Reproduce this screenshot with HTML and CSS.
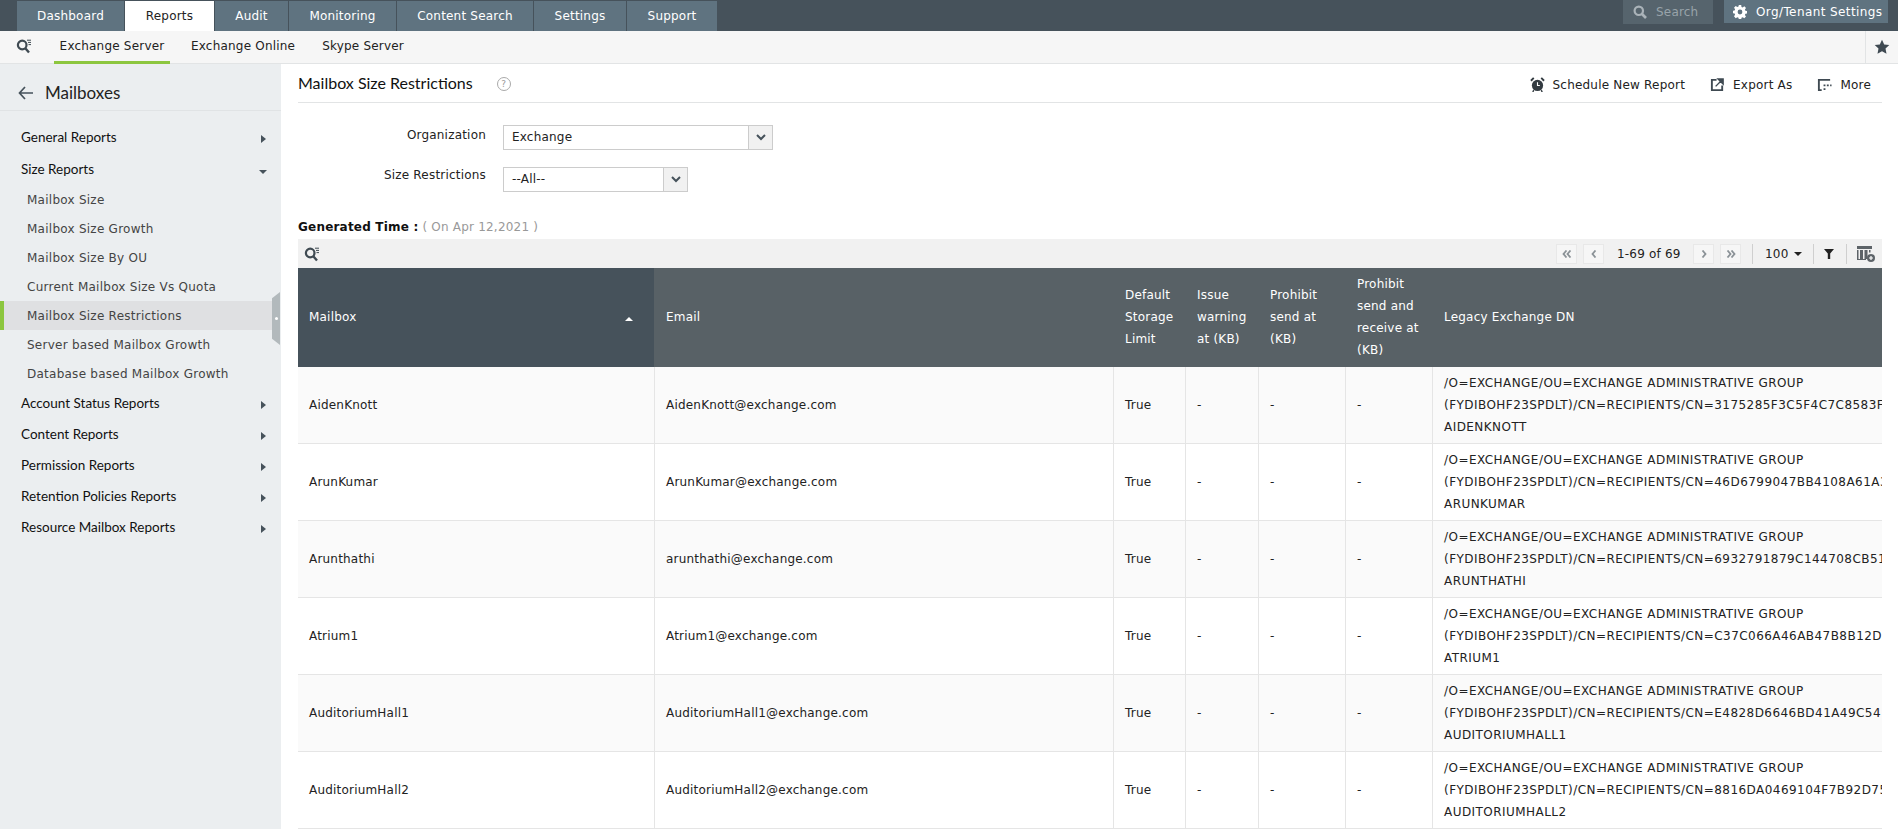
FILE: index.html
```html
<!DOCTYPE html>
<html lang="en">
<head>
<meta charset="utf-8">
<title>Mailbox Size Restrictions</title>
<link rel="stylesheet" href="styles.css">
</head>
<body>
<header class="topbar">
  <nav class="tabs">
    <a class="tab t-dash">Dashboard</a>
    <a class="tab tab-active t-rep">Reports</a>
    <a class="tab t-aud">Audit</a>
    <a class="tab t-mon">Monitoring</a>
    <a class="tab t-con">Content Search</a>
    <a class="tab t-set">Settings</a>
    <a class="tab t-sup">Support</a>
  </nav>
  <div class="top-right">
    <div class="top-search">
      <svg class="ic14" viewBox="0 0 14 14"><circle cx="5.8" cy="5.8" r="4.2" fill="none" stroke="#aab3b9" stroke-width="2.2"/><path d="M9 9l4 4" stroke="#aab3b9" stroke-width="2.6"/></svg>
      <span>Search</span>
    </div>
    <div class="org-btn">
      <svg class="ic14" viewBox="0 0 14 14"><path fill="#fff" fill-rule="evenodd" d="M5.8 0h2.4l.3 1.9 1.2.5L11.3 1.300l1.700 1.700-1.100 1.600.5 1.200 1.900.3v2.400l-1.900.3-.5 1.200 1.100 1.600-1.700 1.700-1.600-1.100-1.200.5-.3 1.900H5.800l-.3-1.900-1.200-.5-1.600 1.100L1 11.300l1.100-1.600-.5-1.200L-.3 8.200V5.800l1.900-.3.500-1.200L1 2.700 2.700 1l1.600 1.100 1.200-.5zM7 4.600a2.400 2.400 0 100 4.800 2.400 2.400 0 000-4.800z"/></svg>
      <span>Org/Tenant Settings</span>
    </div>
  </div>
</header>

<div class="subbar">
  <svg class="search-ic sub-search" viewBox="0 0 16 16"><circle cx="6.200" cy="7" r="4.300" fill="none" stroke="#3f4a52" stroke-width="2.200"/><path d="M9.500 10.500l3.500 4" stroke="#3f4a52" stroke-width="2.400"/><path d="M11 2.200h4M12 4.400h3M12.500 6.600h2.500" stroke="#3f4a52" stroke-width="1"/></svg>
  <a class="subtab subtab-active">Exchange Server</a>
  <a class="subtab">Exchange Online</a>
  <a class="subtab">Skype Server</a>
  <div class="star-cell">
    <svg class="star" viewBox="0 0 16 16"><path fill="#3f4a52" d="M8 .8l2.200 4.700 5.100.6-3.800 3.500 1 5.100L8 12.200l-4.500 2.500 1-5.100L.7 6.100l5.100-.6z"/></svg>
  </div>
</div>

<div class="body">
  <aside class="side">
    <div class="side-head">
      <svg class="back" viewBox="0 0 15 14"><path d="M7 1L1.500 7 7 13M1.500 7H15" fill="none" stroke="#46525b" stroke-width="1.700"/></svg>
      <span>Mailboxes</span>
    </div>
    <ul class="side-list">
      <li class="grp grp-tall">General Reports<i class="arr-r"></i></li>
      <li class="grp grp-tall">Size Reports<i class="arr-d"></i></li>
      <li class="sub">Mailbox Size</li>
      <li class="sub">Mailbox Size Growth</li>
      <li class="sub">Mailbox Size By OU</li>
      <li class="sub">Current Mailbox Size Vs Quota</li>
      <li class="sub sub-active">Mailbox Size Restrictions<i class="handle"></i></li>
      <li class="sub">Server based Mailbox Growth</li>
      <li class="sub">Database based Mailbox Growth</li>
      <li class="grp">Account Status Reports<i class="arr-r"></i></li>
      <li class="grp">Content Reports<i class="arr-r"></i></li>
      <li class="grp">Permission Reports<i class="arr-r"></i></li>
      <li class="grp">Retention Policies Reports<i class="arr-r"></i></li>
      <li class="grp">Resource Mailbox Reports<i class="arr-r"></i></li>
    </ul>
  </aside>

  <main class="main">
    <div class="title-bar">
      <h1 class="title">Mailbox Size Restrictions</h1>
      <span class="help">?</span>
      <div class="actions">
        <a class="action a-sched">
          <svg class="ic16" viewBox="0 0 16 16"><circle cx="8" cy="9" r="6" fill="#333b41"/><path d="M1 4l3-3M15 4l-3-3" stroke="#333b41" stroke-width="2"/><path d="M8 5.500V9h2.500" fill="none" stroke="#fff" stroke-width="1.200"/><path d="M4 14l-1 2M12 14l1 2" stroke="#333b41" stroke-width="1.500"/></svg>
          Schedule New Report</a>
        <a class="action a-exp">
          <svg class="ic16" viewBox="0 0 16 16"><path d="M7 3H2v11h11V9" fill="none" stroke="#3f4a52" stroke-width="2"/><path d="M6 10l6-6M8.500 2H14v5.500z" fill="#3f4a52" stroke="#3f4a52" stroke-width="1.500"/></svg>
          Export As</a>
        <a class="action a-more">
          <svg class="ic16" viewBox="0 0 16 16"><path d="M14 3H2v11h3" fill="none" stroke="#3f4a52" stroke-width="2"/><path d="M7 9h2M10.500 9h2M14 9h1.500M7 13h2" stroke="#3f4a52" stroke-width="1.800"/></svg>
          More</a>
      </div>
    </div>

    <form class="filters">
      <label class="f-label">Organization</label>
      <div class="select sel-org"><span class="sel-val">Exchange</span><span class="sel-btn"><svg class="chev" viewBox="0 0 10 7"><path d="M1 1l4 4 4-4" fill="none" stroke="#46525b" stroke-width="2"/></svg></span></div>
      <label class="f-label f-label-2">Size Restrictions</label>
      <div class="select sel-size"><span class="sel-val">--All--</span><span class="sel-btn"><svg class="chev" viewBox="0 0 10 7"><path d="M1 1l4 4 4-4" fill="none" stroke="#46525b" stroke-width="2"/></svg></span></div>
    </form>

    <p class="generated"><b>Generated Time :</b> <span>( On Apr 12,2021 )</span></p>

    <div class="toolbar">
      <svg class="search-ic" viewBox="0 0 16 16"><circle cx="6.200" cy="7" r="4.300" fill="none" stroke="#3f4a52" stroke-width="2.200"/><path d="M9.500 10.500l3.500 4" stroke="#3f4a52" stroke-width="2.400"/><path d="M11 2.200h4M12 4.400h3M12.500 6.600h2.500" stroke="#3f4a52" stroke-width="1"/></svg>
      <div class="pager">
        <span class="pg"><svg viewBox="0 0 10 8"><path d="M4.500 .5L1.500 4l3 3.500M8.500 .5L5.500 4l3 3.500" fill="none" stroke="#8b9297" stroke-width="1.800"/></svg></span>
        <span class="pg"><svg viewBox="0 0 10 8"><path d="M6.500 .5L3.500 4l3 3.500" fill="none" stroke="#8b9297" stroke-width="1.800"/></svg></span>
        <span class="pg-text">1-69 of 69</span>
        <span class="pg"><svg viewBox="0 0 10 8"><path d="M3.500 .5L6.500 4l-3 3.500" fill="none" stroke="#8b9297" stroke-width="1.800"/></svg></span>
        <span class="pg"><svg viewBox="0 0 10 8"><path d="M1.500 .5L4.500 4l-3 3.500M5.500 .5L8.500 4l-3 3.500" fill="none" stroke="#8b9297" stroke-width="1.800"/></svg></span>
        <i class="tsep sep1"></i>
        <span class="per-page">100<i class="caret"></i></span>
        <i class="tsep"></i>
        <svg class="filter-ic" viewBox="0 0 10 10"><path fill="#222" d="M0 0h10L6.200 4.500V10H3.800V4.500z"/></svg>
        <i class="tsep"></i>
        <svg class="col-ic" viewBox="0 0 18 16"><path fill="#5d6368" d="M0 0h15v3H0zM0 4h1.500v9H0zM3 4h3v9H3zM7.500 4h3v9h-3zM12 4h1.500v2.500H12zM0 13h9v1H0z"/><circle cx="14" cy="12" r="4" fill="#5d6368"/><path d="M12 12h4M14 10v4" stroke="#fff" stroke-width="1.200"/></svg>
      </div>
    </div>

    <div class="table-wrap">
      <table class="grid">
        <colgroup>
          <col class="c1"><col class="c2"><col class="c3"><col class="c4"><col class="c5"><col class="c6"><col class="c7">
        </colgroup>
        <thead>
          <tr>
            <th class="sorted"><div class="sort-cell">Mailbox<i class="sort-up"></i></div></th>
            <th>Email</th>
            <th>Default<br>Storage<br>Limit</th>
            <th>Issue<br>warning<br>at (KB)</th>
            <th>Prohibit<br>send at<br>(KB)</th>
            <th>Prohibit<br>send and<br>receive at<br>(KB)</th>
            <th>Legacy Exchange DN</th>
          </tr>
        </thead>
        <tbody>
          <tr><td>AidenKnott</td><td>AidenKnott@exchange.com</td><td>True</td><td>-</td><td>-</td><td>-</td><td class="dn">/O=EXCHANGE/OU=EXCHANGE ADMINISTRATIVE GROUP<br>(FYDIBOHF23SPDLT)/CN=RECIPIENTS/CN=3175285F3C5F4C7C8583F<br>AIDENKNOTT</td></tr>
          <tr><td>ArunKumar</td><td>ArunKumar@exchange.com</td><td>True</td><td>-</td><td>-</td><td>-</td><td class="dn">/O=EXCHANGE/OU=EXCHANGE ADMINISTRATIVE GROUP<br>(FYDIBOHF23SPDLT)/CN=RECIPIENTS/CN=46D6799047BB4108A61A3<br>ARUNKUMAR</td></tr>
          <tr><td>Arunthathi</td><td>arunthathi@exchange.com</td><td>True</td><td>-</td><td>-</td><td>-</td><td class="dn">/O=EXCHANGE/OU=EXCHANGE ADMINISTRATIVE GROUP<br>(FYDIBOHF23SPDLT)/CN=RECIPIENTS/CN=6932791879C144708CB51<br>ARUNTHATHI</td></tr>
          <tr><td>Atrium1</td><td>Atrium1@exchange.com</td><td>True</td><td>-</td><td>-</td><td>-</td><td class="dn">/O=EXCHANGE/OU=EXCHANGE ADMINISTRATIVE GROUP<br>(FYDIBOHF23SPDLT)/CN=RECIPIENTS/CN=C37C066A46AB47B8B12D<br>ATRIUM1</td></tr>
          <tr><td>AuditoriumHall1</td><td>AuditoriumHall1@exchange.com</td><td>True</td><td>-</td><td>-</td><td>-</td><td class="dn">/O=EXCHANGE/OU=EXCHANGE ADMINISTRATIVE GROUP<br>(FYDIBOHF23SPDLT)/CN=RECIPIENTS/CN=E4828D6646BD41A49C54<br>AUDITORIUMHALL1</td></tr>
          <tr><td>AuditoriumHall2</td><td>AuditoriumHall2@exchange.com</td><td>True</td><td>-</td><td>-</td><td>-</td><td class="dn">/O=EXCHANGE/OU=EXCHANGE ADMINISTRATIVE GROUP<br>(FYDIBOHF23SPDLT)/CN=RECIPIENTS/CN=8816DA0469104F7B92D75<br>AUDITORIUMHALL2</td></tr>
        </tbody>
      </table>
    </div>
  </main>
</div>
</body>
</html>
```

FILE: styles.css
```css
* { box-sizing: border-box; }
html, body { margin: 0; padding: 0; height: 829px; overflow: hidden; }
body { width: 1898px; font-family: "DejaVu Sans", Verdana, sans-serif; font-size: 12px; letter-spacing: 0.2px; color: #222; background: #fff; display: flex; flex-direction: column; }

.topbar { height: 31px; flex: none; background: #46525b; display: flex; justify-content: space-between; }
.tabs { display: flex; padding: 1px 0 0 17px; gap: 1px; height: 31px; }
.tab { background: #5f7380; color: #fff; display: flex; align-items: center; justify-content: center; height: 30px; }
.tab-active { background: #fff; color: #222; }
.t-dash { width: 107px; }
.t-rep { width: 89px; }
.t-aud { width: 73px; }
.t-mon { width: 107px; }
.t-con { width: 136px; }
.t-set { width: 92px; }
.t-sup { width: 90px; }
.top-right { display: flex; padding-right: 10px; gap: 11px; }
.top-search { width: 90px; height: 24px; background: #56646d; color: #98a3aa; display: flex; align-items: center; gap: 9px; padding-left: 10px; }
.org-btn { width: 164px; height: 23px; background: #5f7380; color: #fff; display: flex; align-items: center; gap: 9px; padding-left: 9px; letter-spacing: 0.4px; white-space: nowrap; }
.ic14 { width: 14px; height: 14px; flex: none; }

.subbar { height: 33px; flex: none; background: #f6f6f6; border-bottom: 1px solid #e2e4e5; display: flex; }
.search-ic { width: 16px; height: 16px; flex: none; }
.sub-search { margin: 7px 0 0 16px; }
.subtab { height: 33px; padding: 0 6px 3px; display: flex; align-items: center; color: #222; white-space: nowrap; }
.subtab-active { margin-left: 22px; width: 116px; justify-content: center; border-bottom: 3px solid #8cc63f; padding: 0; margin-right: 15px; }
.subtab + .subtab + .subtab { margin-left: 15px; }
.star-cell { margin-left: auto; width: 33px; height: 32px; border-left: 1px solid #e2e4e5; display: flex; align-items: center; justify-content: center; }
.star { width: 16px; height: 16px; }

.body { flex: 1; display: flex; min-height: 0; }
.side { width: 281px; flex: none; background: #ebeef0; }
.side-head { height: 47px; border-bottom: 1px solid #e0e3e5; display: flex; align-items: center; padding: 11px 0 0 18px; gap: 12px; font-family: Lato, sans-serif; font-size: 17px; letter-spacing: 0; color: #222; }
.back { width: 15px; height: 14px; flex: none; }
.side-list { list-style: none; margin: 0; padding: 10px 0 0; }
.grp { height: 31px; padding-left: 21px; font-family: Lato, sans-serif; font-size: 13.5px; letter-spacing: 0; color: #111; display: flex; align-items: center; position: relative; }
.grp-tall { height: 32px; }
.sub { height: 29px; padding-left: 27px; letter-spacing: 0.25px; color: #444; display: flex; align-items: center; position: relative; white-space: nowrap; }
.sub + .grp { margin-top: -1px; }
.sub-active { background: #dfe0e2; border-left: 4px solid #8cc63f; padding-left: 23px; margin-right: 9px; }
.arr-r { position: absolute; right: 15px; top: 50%; margin-top: -2px; border-left: 5px solid #46525b; border-top: 4px solid transparent; border-bottom: 4px solid transparent; }
.arr-d { position: absolute; right: 14px; top: 50%; margin-top: 1px; border-top: 4px solid #46525b; border-left: 4px solid transparent; border-right: 4px solid transparent; }
.handle { position: absolute; right: -8px; top: -9px; width: 8px; height: 53px; background: #b2b9bc; clip-path: polygon(100% 0, 100% 100%, 0 88%, 0 12%); }
.handle::after { content: ""; position: absolute; left: 3px; top: 25px; width: 3px; height: 3px; background: #fff; border-radius: 50%; }

.main { flex: 1; min-width: 0; padding: 0 16px 0 17px; }
.title-bar { height: 39px; border-bottom: 1px solid #e2e4e5; display: flex; align-items: center; padding-bottom: 2px; }
.title { margin: 0; font-family: Lato, sans-serif; font-weight: 400; font-size: 16px; letter-spacing: 0; color: #111; }
.help { margin: 3px 0 0 24px; width: 14px; height: 14px; border: 1px solid #a9a9a9; border-radius: 50%; color: #9a9a9a; font-size: 9px; letter-spacing: 0; display: flex; align-items: center; justify-content: center; }
.actions { margin: 5px 0 0 auto; display: flex; padding-right: 11px; }
.action { display: flex; align-items: center; gap: 8px; color: #222; white-space: nowrap; }
.a-exp { margin-left: 25px; }
.a-more { margin-left: 25px; }
.ic16 { width: 15px; height: 15px; flex: none; }

.filters { display: grid; grid-template-columns: 188px auto; justify-content: start; column-gap: 17px; row-gap: 17px; padding-top: 22px; }
.f-label { text-align: right; padding-top: 3px; line-height: 14px; color: #222; white-space: nowrap; }
.f-label-2 { padding-top: 1px; }
.select { height: 25px; border: 1px solid #ccc; display: flex; background: #fff; }
.sel-org { width: 270px; }
.sel-size { width: 185px; }
.sel-val { flex: 1; padding-left: 8px; line-height: 23px; }
.sel-btn { width: 24px; background: #f1f1f1; border-left: 1px solid #ccc; display: flex; align-items: center; justify-content: center; }
.chev { width: 10px; height: 7px; }

.generated { margin: 28px 0 0; height: 15px; line-height: 15px; white-space: nowrap; }
.generated b { color: #111; }
.generated span { color: #999; }

.toolbar { height: 29px; margin-top: 4px; background: #f1f1f1; display: flex; align-items: center; justify-content: space-between; padding: 0 7px 0 6px; }
.pager { display: flex; align-items: center; }
.pg { width: 21px; height: 20px; background: #f6f6f6; border: 1px solid #e8e8e8; display: flex; align-items: center; justify-content: center; margin-right: 6px; }
.pg svg { width: 10px; height: 8px; }
.pg-text { width: 83px; padding-left: 7px; white-space: nowrap; }
.tsep { width: 1px; height: 20px; background: #cfcfcf; display: block; }
.sep1 { margin-left: 5px; }
.per-page { margin-left: 12px; width: 48px; display: flex; align-items: center; white-space: nowrap; }
.caret { margin-left: 5px; border-top: 4px solid #222; border-left: 4px solid transparent; border-right: 4px solid transparent; }
.filter-ic { width: 10px; height: 10px; margin: 0 12px 0 10px; }
.col-ic { width: 18px; height: 16px; margin-left: 10px; }

.table-wrap { width: 100%; overflow: hidden; }
.grid { width: 1584px; table-layout: fixed; border-collapse: separate; border-spacing: 0; }
.c1 { width: 356px; }
.c2 { width: 459px; }
.c3 { width: 72px; }
.c4 { width: 73px; }
.c5 { width: 87px; }
.c6 { width: 87px; }
.c7 { width: 450px; }
.grid th { background: #586166; color: #fff; font-weight: 400; text-align: left; padding: 5px 12px 6px; line-height: 22px; height: 99px; white-space: nowrap; overflow: hidden; }
.grid th:first-child { padding-left: 11px; }
.grid th.sorted { background: #46525b; }
.sort-cell { display: flex; align-items: center; justify-content: space-between; padding-right: 9px; }
.sort-up { border-bottom: 4px solid #fff; border-left: 4px solid transparent; border-right: 4px solid transparent; margin-top: 3px; }
.grid td { height: 77px; padding: 5px 12px 5px 11px; line-height: 22px; border-bottom: 1px solid #e5e5e5; border-left: 1px solid #e5e5e5; white-space: nowrap; overflow: hidden; color: #222; vertical-align: middle; }
.grid td:first-child { border-left: 0; }
.grid td.dn { letter-spacing: 0.45px; padding-right: 0; }
.grid tbody tr:nth-child(odd) td { background: #fafafa; }
```
